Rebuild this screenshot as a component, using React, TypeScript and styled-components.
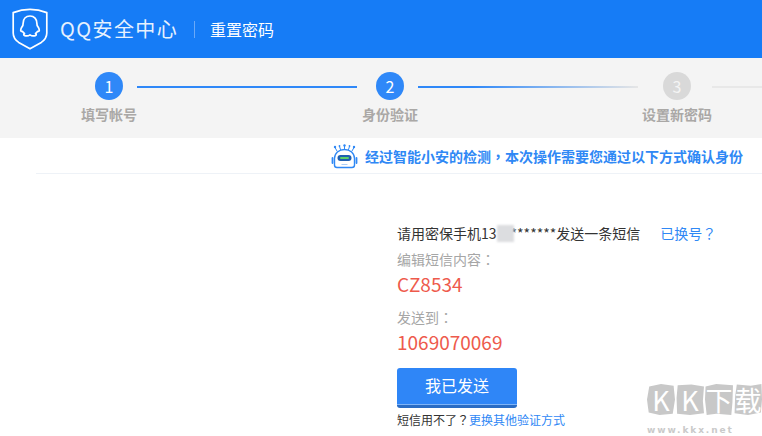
import styled, { createGlobalStyle } from 'styled-components';

const GlobalStyle = createGlobalStyle`
  html, body {
    margin: 0;
    padding: 0;
    background: #fff;
    overflow: hidden;
  }
  body {
    font-family: "Noto Sans CJK SC", "Noto Sans", sans-serif;
  }
`;

const Page = styled.div`
  position: relative;
  width: 762px;
  height: 436px;
  overflow: hidden;
`;

const Header = styled.header`
  height: 58px;
  background: #167cf6;
  display: flex;
  align-items: center;
  padding-left: 12px;
  color: #fff;
`;

const Brand = styled.div`
  margin-left: 12px;
  font-size: 20px;
  line-height: 24px;
  letter-spacing: 1.4px;
  width: 118px;
  white-space: nowrap;
  color: #e6f1fe;
`;

const Divider = styled.div`
  width: 1px;
  height: 17px;
  margin: 0 15px 0 16px;
  background: #6aa9f8;
`;

const PageTitle = styled.div`
  font-size: 16px;
  line-height: 24px;
`;

const StepBand = styled.div`
  height: 80px;
  background: #f4f4f4;
  display: flex;
  padding-top: 14px;
  box-sizing: border-box;
`;

const Step = styled.div<{ $left: number }>`
  flex: none;
  width: 28px;
  margin-left: ${p => p.$left}px;
  display: flex;
  flex-direction: column;
  align-items: center;
`;

const Circle = styled.div<{ $on?: boolean }>`
  width: 28px;
  height: 28px;
  border-radius: 50%;
  background: ${p => (p.$on ? '#2f88f8' : '#d9d9d9')};
  color: ${p => (p.$on ? '#fff' : '#f4f4f4')};
  font-size: 16px;
  line-height: 28px;
  text-align: center;
`;

const StepLabel = styled.div`
  margin-top: 5px;
  font-size: 14px;
  line-height: 18px;
  font-weight: 700;
  color: #aaa8a6;
  white-space: nowrap;
`;

const Line = styled.div<{ $left: number; $width: number; $fill: string }>`
  flex: none;
  width: ${p => p.$width}px;
  height: 2px;
  margin: 14px 0 0 ${p => p.$left}px;
  background: ${p => p.$fill};
`;

const Notice = styled.div`
  height: 35px;
  margin-left: 36px;
  border-bottom: 1px solid #eef2f7;
  display: flex;
  align-items: center;
  justify-content: flex-end;
  padding-right: 19px;
  gap: 7px;
`;

const NoticeText = styled.div`
  font-size: 14px;
  line-height: 20px;
  font-weight: 700;
  color: #2f88f5;
  white-space: nowrap;
`;

// full-width punctuation sits centred in its box in the reference
const Punct = styled.span`
  font-family: "Noto Sans CJK TC", sans-serif;
`;

const Content = styled.main`
  margin-left: 397px;
  padding-top: 49px;
`;

const PhoneRow = styled.div`
  display: flex;
  font-size: 14px;
  line-height: 20px;
  color: #333;
  white-space: nowrap;
`;

const Mask = styled.span`
  display: inline-block;
  width: 17px;
  height: 17px;
  margin: 2px -3px 0 0;
  background: #dcdde0;
  filter: blur(1px);
`;

const SwitchLink = styled.a`
  margin-left: 20px;
  color: #2f88f5;
`;

const FieldLabel = styled.div<{ $top: number }>`
  margin-top: ${p => p.$top}px;
  font-size: 14px;
  line-height: 20px;
  color: #a6a6a6;
`;

const Code = styled.div`
  margin-top: 2px;
  font-size: 19px;
  line-height: 26px;
  color: #ee5a4c;
`;

const SentButton = styled.button`
  display: block;
  width: 120px;
  height: 40px;
  margin-top: 13px;
  padding: 0 0 3px;
  border: 0;
  border-bottom: 3px solid #2a6cc4;
  box-shadow: inset 0 -1px 0 #7fb4f8;
  border-radius: 3px;
  background: #2f86f7;
  color: #fff;
  font-family: inherit;
  font-size: 16px;
  line-height: 22px;
`;

const Fallback = styled.div`
  margin-top: 3px;
  font-size: 12px;
  line-height: 18px;
  color: #333;
`;

const FallbackLink = styled.a`
  color: #2f88f5;
`;

const Watermark = styled.div`
  position: absolute;
  left: 647px;
  top: 384px;
  width: 115px;
`;

const Blobs = styled.div`
  display: flex;
  gap: 1px;
`;

const Blob = styled.span<{ $shape: string }>`
  width: 28px;
  height: 31px;
  background: #c8c8c8;
  color: #fff;
  font-size: 27px;
  font-weight: 400;
  line-height: 31px;
  text-align: center;
  clip-path: polygon(${p => p.$shape});
`;

const WatermarkUrl = styled.div`
  margin-top: 9px;
  font-family: "DejaVu Sans", sans-serif;
  font-size: 9px;
  line-height: 12px;
  font-weight: 700;
  letter-spacing: 1.9px;
  color: #cacaca;
`;

const ShieldLogo = () => (
  <svg width="36" height="42" viewBox="0 0 36 42" fill="none" stroke="#fff" strokeWidth="1.7" strokeLinejoin="round" strokeLinecap="round">
    <path d="M1.2 4.6C7 2.4 12.4 1.4 18 1.4s11 1 16.800 3.200V25c0 4.600-2 7-5.500 9.400L18 40.800 6.700 34.400C3.200 32 1.200 29.600 1.200 25z" />
    <path d="M18 8c-4.300 0-6.900 3.300-6.900 7.400 0 1.400-.2 2.200-.9 3.200-.9 1.300-1.500 2.500-1.500 3.600 0 1 .8 1.400 1.800 1.200.7 1 1.300 1.600 2 2.100-1 .6-1.100 1.700.2 2.100 1.600.5 4 .2 5.300-.7 1.300.9 3.700 1.200 5.300.7 1.300-.4 1.200-1.500.2-2.100.7-.5 1.300-1.100 2-2.100 1 .2 1.800-.2 1.800-1.200 0-1.100-.6-2.300-1.500-3.600-.7-1-.9-1.800-.9-3.200C24.900 11.300 22.300 8 18 8z" />
  </svg>
);

const RobotIcon = () => (
  <svg width="27" height="26" viewBox="0 0 27 26" fill="none">
    <g stroke="#2f88f5" strokeWidth="1" strokeLinecap="round">
      <path d="M6 8 4 4.500M9.500 6.500 8.500 3.500M13.500 6V3M17.500 6.500 18.500 3.500M21 8 23 4.500" />
      <path d="M3.500 22V15.500c0-5.500 4.500-9 10-9s10 3.500 10 9V22c0 1.500-1 2.500-2.500 2.500H6c-1.500 0-2.500-1-2.500-2.500z" strokeWidth="1.400" />
      <path d="M1.500 15v5M25.500 15v5" strokeWidth="1.800" />
    </g>
    <g fill="#2f88f5">
      <circle cx="4" cy="4" r="1.200" />
      <circle cx="8.500" cy="3" r=".9" />
      <circle cx="13.500" cy="2.500" r="1.200" />
      <circle cx="18.500" cy="3" r=".9" />
      <circle cx="23" cy="4" r="1.200" />
    </g>
    <rect x="6.500" y="12" width="14" height="6" rx="3" fill="#1f5fb0" />
    <rect x="9" y="14" width="9" height="2" rx="1" fill="#5ed06a" />
    <rect x="10.500" y="21" width="6" height="1" fill="#a9cdf8" />
  </svg>
);

export default function App() {
  return (
    <Page>
      <GlobalStyle />
      <Header>
        <ShieldLogo />
        <Brand>QQ安全中心</Brand>
        <Divider />
        <PageTitle>重置密码</PageTitle>
      </Header>

      <StepBand>
        <Step $left={95}>
          <Circle $on>1</Circle>
          <StepLabel>填写帐号</StepLabel>
        </Step>
        <Line $left={14} $width={220} $fill="#2f88f8" />
        <Step $left={19}>
          <Circle $on>2</Circle>
          <StepLabel>身份验证</StepLabel>
        </Step>
        <Line $left={14} $width={220} $fill="linear-gradient(90deg, #2f88f8 0%, #2f88f8 25%, #e6e6e6 100%)" />
        <Step $left={25}>
          <Circle>3</Circle>
          <StepLabel>设置新密码</StepLabel>
        </Step>
        <Line $left={21} $width={50} $fill="#e8e8e8" />
      </StepBand>

      <Notice>
        <RobotIcon />
        <NoticeText>经过智能小安的检测<Punct>，</Punct>本次操作需要您通过以下方式确认身份</NoticeText>
      </Notice>

      <Content>
        <PhoneRow>
          请用密保手机13
          <Mask />
          *******发送一条短信
          <SwitchLink>已换号<Punct>？</Punct></SwitchLink>
        </PhoneRow>
        <FieldLabel $top={6}>编辑短信内容<Punct>：</Punct></FieldLabel>
        <Code>CZ8534</Code>
        <FieldLabel $top={10}>发送到<Punct>：</Punct></FieldLabel>
        <Code>1069070069</Code>
        <SentButton type="button">我已发送</SentButton>
        <Fallback>
          短信用不了<Punct>？</Punct><FallbackLink>更换其他验证方式</FallbackLink>
        </Fallback>
      </Content>

      <Watermark>
        <Blobs>
          <Blob $shape="8% 8%, 50% 0, 95% 6%, 100% 50%, 92% 96%, 45% 100%, 6% 92%, 0 50%">K</Blob>
          <Blob $shape="6% 4%, 55% 2%, 100% 8%, 96% 55%, 100% 94%, 50% 100%, 4% 96%, 2% 45%">K</Blob>
          <Blob $shape="2% 8%, 40% 0, 100% 4%, 98% 60%, 94% 100%, 40% 96%, 6% 100%, 0 50%">下</Blob>
          <Blob $shape="10% 2%, 60% 6%, 98% 0, 100% 50%, 96% 92%, 50% 100%, 2% 94%, 4% 40%">载</Blob>
        </Blobs>
        <WatermarkUrl>www.kkx.net</WatermarkUrl>
      </Watermark>
    </Page>
  );
}
